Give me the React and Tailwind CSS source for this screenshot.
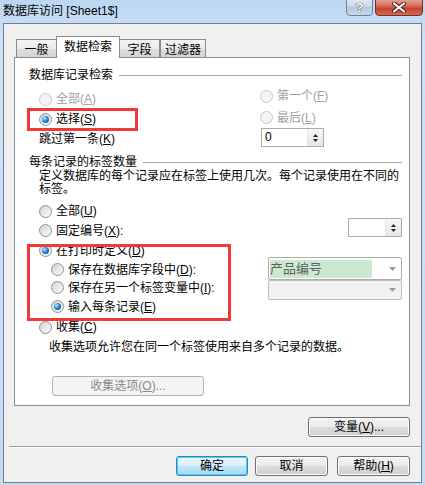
import clsx from "clsx";

// Win7 style radio button
function Radio({ checked, disabled }) {
  return (
    <span
      className={clsx(
        "inline-flex w-[13px] h-[13px] shrink-0 items-center justify-center rounded-full border",
        disabled
          ? "border-[#c9c9c9] bg-[#f4f4f4]"
          : "border-[#8e8f8f] bg-[linear-gradient(135deg,#d2d2d2,#fdfdfd)]"
      )}
    >
      {checked && (
        <span className="w-[7px] h-[7px] rounded-full bg-[radial-gradient(circle_at_35%_35%,#b4ecff_0%,#2b86d6_45%,#0b3e78_100%)]" />
      )}
    </span>
  );
}

function RadioRow({ checked, disabled, h, children }) {
  return (
    <div className={clsx("flex items-center", h)}>
      <Radio checked={checked} disabled={disabled} />
      <span className={clsx("ml-[4px] whitespace-nowrap", disabled && "text-[#a0a0a0]")}>{children}</span>
    </div>
  );
}

function Acc({ k }) {
  return (
    <>
      (<span className="underline">{k}</span>)
    </>
  );
}

function GroupHeader({ children }) {
  return (
    <div className="flex items-center h-[14px]">
      <span className="whitespace-nowrap">{children}</span>
      <div className="ml-[6px] flex-1 h-px bg-[#a8a8a8]" />
    </div>
  );
}

function Spin({ value, w }) {
  return (
    <div className={clsx("flex h-[19px] border border-[#abadb3] bg-white", w)}>
      <div className="flex-1 pl-[3px] leading-[17px]">{value}</div>
      <div className="w-[16px] flex flex-col items-center justify-center gap-[2px] bg-[linear-gradient(#f7f7f7,#e6e6e6)] border-l border-[#e8e8e8]">
        <svg width="5" height="3" viewBox="0 0 5 3"><path d="M0 3 L2.5 0 L5 3 Z" fill="#222" /></svg>
        <svg width="5" height="3" viewBox="0 0 5 3"><path d="M0 0 L5 0 L2.5 3 Z" fill="#222" /></svg>
      </div>
    </div>
  );
}

function Arrow() {
  return (
    <svg width="7" height="4" viewBox="0 0 7 4" className="mr-[5px]">
      <path d="M0 0 L7 0 L3.5 4 Z" fill="#9a9a9a" />
    </svg>
  );
}

function Btn({ w, def, disabled, children }) {
  return (
    <div
      className={clsx(
        "h-[20px] flex items-center justify-center rounded-[3px] border",
        w,
        def
          ? "border-[#3c7fb1] shadow-[inset_0_0_0_1px_#48d4fb] bg-[linear-gradient(#eaf6fd,#d9f0fc_50%,#bee6fd_50%,#a7d9f5)]"
          : disabled
          ? "border-[#adb2b5] bg-[#f4f4f4] text-[#8a8a8a]"
          : "border-[#707070] shadow-[inset_0_0_0_1px_#fcfcfc] bg-[linear-gradient(#f2f2f2,#ebebeb_50%,#dddddd_50%,#cfcfcf)]"
      )}
    >
      {children}
    </div>
  );
}

export default function App() {
  const tabs = [
    { name: "一般", w: "w-[41px]", ml: "" },
    { name: "数据检索", w: "w-[64px]", ml: "-ml-px", active: true },
    { name: "字段", w: "w-[41px]", ml: "-ml-px" },
    { name: "过滤器", w: "w-[46px]", ml: "" },
  ];

  return (
    <div className="w-[425px] h-[485px] bg-[linear-gradient(#bcd6f1,#cfe2f6_40px,#c6dcf3)] text-[12px] leading-[14px] text-black font-['Liberation_Sans','Noto_Sans_CJK_SC',sans-serif] overflow-hidden">
      {/* title bar */}
      <div className="h-[23px] flex items-start">
        <div className="pl-[3px] h-[22px] flex items-center whitespace-nowrap">数据库访问 [Sheet1$]</div>
        <div className="ml-auto mr-[2px] flex gap-[2px]">
          <div className="w-[27px] h-[17px] -mt-px rounded-b-[4px] border border-[#6f819a] bg-[linear-gradient(#dfe9f5,#c4d4e8_50%,#b4c7df_50%,#c9d9ec)] flex items-center justify-center text-white font-bold text-[13px] [text-shadow:0_0_1px_#333,0_0_1px_#333]">
            ?
          </div>
          <div className="w-[48px] h-[17px] -mt-px rounded-b-[4px] border border-[#7a2e26] bg-[linear-gradient(#e3a195,#d06352_45%,#c24330_55%,#d46a55)] flex items-center justify-center">
            <svg width="14" height="11" viewBox="0 0 14 11">
              <path d="M2 1.5 L12 9.5 M12 1.5 L2 9.5" stroke="#4a1a14" strokeWidth="4" strokeLinecap="round" />
              <path d="M2 1.5 L12 9.5 M12 1.5 L2 9.5" stroke="#fff" strokeWidth="2.2" strokeLinecap="round" />
            </svg>
          </div>
        </div>
      </div>

      {/* client area */}
      <div className="ml-[3px] w-[419px] h-[460px] border border-[#6f7f93] bg-[#f0f0f0] pt-[12px]">
        {/* tabs */}
        <div className="ml-[12px] flex items-end h-[21px] relative z-10">
          {tabs.map((t) => (
            <div
              key={t.name}
              className={clsx(
                "flex items-center justify-center border border-[#898c95] whitespace-nowrap",
                t.w,
                t.ml,
                t.active
                  ? "h-[22px] -mb-px border-b-0 bg-white pb-[2px]"
                  : "h-[18px] border-b-0 bg-[linear-gradient(#f3f3f3,#ebebeb_50%,#dedede_50%,#d5d5d5)] pt-[2px]"
              )}
            >
              {t.name}
            </div>
          ))}
        </div>

        {/* tab panel */}
        <div className="relative ml-[10px] w-[396px] h-[349px] border border-[#898c95] bg-white pl-[14px] pr-[7px] pt-[10px]">
          <GroupHeader>数据库记录检索</GroupHeader>
          <div className="flex">
            <div className="ml-[10px] w-[221px] pt-[7px]">
              <RadioRow h="h-[20px]" disabled>
                全部<Acc k="A" />
              </RadioRow>
              <RadioRow h="h-[20px]" checked>
                选择<Acc k="S" />
              </RadioRow>
              <div className="h-[20px] flex items-center">
                跳过第一条<Acc k="K" />
              </div>
            </div>
            <div className="pt-[3px]">
              <RadioRow h="h-[22px]" disabled>
                第一个<Acc k="F" />
              </RadioRow>
              <RadioRow h="h-[21px]" disabled>
                最后<Acc k="L" />
              </RadioRow>
              <div className="ml-px">
                <Spin value="0" w="w-[63px]" />
              </div>
            </div>
          </div>

          <div className="mt-[6px]">
            <GroupHeader>每条记录的标签数量</GroupHeader>
          </div>
          <div className="mt-[1px] ml-[10px] leading-[13px] whitespace-nowrap">
            <div>定义数据库的每个记录应在标签上使用几次。每个记录使用在不同的</div>
            <div>标签。</div>
          </div>

          <div className="mt-[5px] ml-[10px]">
            <RadioRow h="h-[20px]">
              全部<Acc k="U" />
            </RadioRow>
            <div className="flex items-start">
              <RadioRow h="h-[19px]">
                固定编号<Acc k="X" />:
              </RadioRow>
              <div className="ml-auto -mt-[3px]">
                <Spin value="" w="w-[54px]" />
              </div>
            </div>
            <RadioRow h="h-[21px]" checked>
              在打印时定义<Acc k="D" />
            </RadioRow>
            <div className="flex items-start">
              <div className="ml-[12px]">
                <RadioRow h="h-[17px]">
                  保存在数据库字段中<Acc k="D" />:
                </RadioRow>
                <RadioRow h="h-[19px]">
                  保存在另一个标签变量中<Acc k="I" />:
                </RadioRow>
                <RadioRow h="h-[19px]" checked>
                  输入每条记录<Acc k="E" />
                </RadioRow>
              </div>
              <div className="ml-auto -mt-[4px] w-[134px]">
                <div className="h-[23px] flex items-center rounded-[2px] border border-[#acacac] bg-white pl-px">
                  <div className="flex-1 h-[18px] bg-[#cde8d0] text-[#5f5f5f] leading-[18px] mr-[17px] text-[13px]">产品编号</div>
                  <Arrow />
                </div>
                <div className="h-[20px] flex items-center justify-end rounded-[2px] border border-[#bdbdbd] bg-[#f2f2f2]">
                  <Arrow />
                </div>
              </div>
            </div>
            <RadioRow h="h-[22px]">
              收集<Acc k="C" />
            </RadioRow>
          </div>
          <div className="mt-[3px] ml-[20px] leading-[12px] whitespace-nowrap">
            收集选项允许您在同一个标签使用来自多个记录的数据。
          </div>
          <div className="mt-[23px] ml-[23px]">
            <Btn w="w-[152px]" disabled>
              收集选项<Acc k="O" />...
            </Btn>
          </div>

          {/* annotation boxes */}
          <div className="absolute left-[12px] top-[50px] w-[111px] h-[23px] border-[3px] border-[#ef3a3a]" />
          <div className="absolute left-[12px] top-[186px] w-[204px] h-[77px] border-[3px] border-[#ef3a3a]" />
        </div>

        <div className="mt-[11px] ml-[10px] w-[396px] flex justify-end">
          <Btn w="w-[102px]">
            变量<Acc k="V" />...
          </Btn>
        </div>

        <div className="mt-[9px] ml-[5px] w-[412px] border-t border-[#a0a0a0] border-b border-b-white" />

        <div className="mt-[8px] ml-[172px] flex">
          <Btn w="w-[72px]" def>确定</Btn>
          <div className="ml-[7px]">
            <Btn w="w-[73px]">取消</Btn>
          </div>
          <div className="ml-[9px]">
            <Btn w="w-[73px]">
              帮助<Acc k="H" />
            </Btn>
          </div>
        </div>
      </div>
    </div>
  );
}
